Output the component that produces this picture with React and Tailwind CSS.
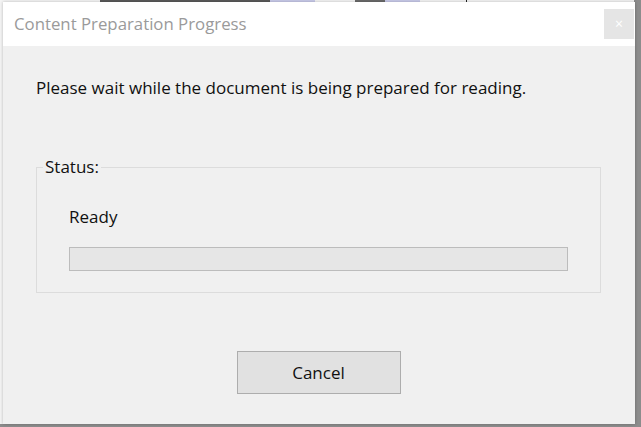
import React from 'react';

const font = { fontFamily: '"Segoe UI", "Open Sans", sans-serif' };

const App = () => {
    return (
        <div className="w-[641px] h-[427px] bg-[#8c8c8c] relative overflow-hidden" style={font}>
            {/* desktop behind the dialog */}
            <div className="absolute top-0 left-0 w-[634px] h-[424px] bg-[#f4f4f4]"></div>
            <div className="absolute top-0 left-[100px] w-[170px] h-[2px] bg-[#5a5a5a]"></div>
            <div className="absolute top-0 left-[270px] w-[45px] h-[2px] bg-[#c9cbea]"></div>
            <div className="absolute top-0 left-[355px] w-[30px] h-[2px] bg-[#6a6a6a]"></div>
            <div className="absolute top-0 left-[385px] w-[35px] h-[2px] bg-[#c9cbea]"></div>
            <div className="absolute top-0 left-[466px] w-[1px] h-[2px] bg-[#222]"></div>

            {/* dialog window */}
            <div className="absolute top-[2px] left-[3px] w-[632px] h-[422px] bg-[#f0f0f0] flex flex-col shadow-[0_0_3px_rgba(0,0,0,0.25)]">
                <div className="h-[44px] bg-white flex items-center justify-between pl-[11px] pr-[1px]">
                    <span className="text-[16.8px] text-[#9a9a9a] leading-none">Content Preparation Progress</span>
                    <button className="w-[30px] h-[30px] bg-[#e5e5e5] flex items-center justify-center text-white text-[14px] leading-none">
                        ×
                    </button>
                </div>

                <div className="flex flex-col pl-[33px] pr-[34px]">
                    <p className="mt-[32px] text-[17px] text-[#111] leading-[20px]">
                        Please wait while the document is being prepared for reading.
                    </p>

                    <fieldset className="mt-[61px] h-[134px] border border-[#dcdcdc] px-0 m-0">
                        <legend className="ml-[6px] px-[2px] text-[17px] text-[#111] leading-[16px]">Status:</legend>
                        <div className="px-[32px] flex flex-col">
                            <div className="mt-[32px] text-[17px] text-[#111] leading-[20px]">Ready</div>
                            <div className="mt-[20px] h-[24px] border border-[#bcbcbc] bg-[#e6e6e6]"></div>
                        </div>
                    </fieldset>

                    <div className="mt-[58px] flex justify-center">
                        <button className="w-[164px] h-[43px] border border-[#adadad] bg-[#e1e1e1] text-[17px] text-[#111]">
                            Cancel
                        </button>
                    </div>
                </div>
            </div>
        </div>
    );
};

export default App;
